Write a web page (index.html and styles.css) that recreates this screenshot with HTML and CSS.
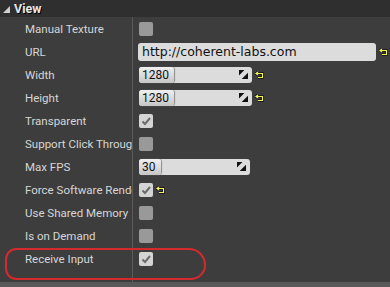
FILE: index.html
```html
<!DOCTYPE html>
<html lang="en">

<head>
    <meta charset="UTF-8">
    <title>View</title>
    <link rel="stylesheet" href="styles.css">
</head>

<body>
    <section class="panel">
        <div class="category">
            <span class="arrow"></span>
            <span class="category_title">View</span>
        </div>
        <div class="props">
            <div class="row">
                <div class="name">Manual Texture</div>
                <div class="value"><span class="check"></span></div>
            </div>
            <div class="row">
                <div class="name">URL</div>
                <div class="value">
                    <div class="textbox">http://coherent-labs.com</div>
                    <svg class="reset" viewBox="0 0 10 8"><path d="M3 1 L1 2.5 L3 4 M1 2.5 H7.5 V6.5 H3" fill="none" stroke="#101010" stroke-width="2.6"/><path d="M3 1 L1 2.5 L3 4 M1 2.5 H7.5 V6.5 H3" fill="none" stroke="#f2f25a" stroke-width="1.2"/></svg>
                </div>
            </div>
            <div class="row">
                <div class="name">Width</div>
                <div class="value">
                    <div class="spin">
                        <span class="spin_num">1280</span>
                        <svg class="spin_grip" viewBox="0 0 10 10"><path d="M0 0 H6 L0 6 Z M10 3 V10 H3 Z" fill="#111"/></svg>
                    </div>
                    <svg class="reset" viewBox="0 0 10 8"><path d="M3 1 L1 2.5 L3 4 M1 2.5 H7.5 V6.5 H3" fill="none" stroke="#101010" stroke-width="2.6"/><path d="M3 1 L1 2.5 L3 4 M1 2.5 H7.5 V6.5 H3" fill="none" stroke="#f2f25a" stroke-width="1.2"/></svg>
                </div>
            </div>
            <div class="row">
                <div class="name">Height</div>
                <div class="value">
                    <div class="spin">
                        <span class="spin_num">1280</span>
                        <svg class="spin_grip" viewBox="0 0 10 10"><path d="M0 0 H6 L0 6 Z M10 3 V10 H3 Z" fill="#111"/></svg>
                    </div>
                    <svg class="reset" viewBox="0 0 10 8"><path d="M3 1 L1 2.5 L3 4 M1 2.5 H7.5 V6.5 H3" fill="none" stroke="#101010" stroke-width="2.6"/><path d="M3 1 L1 2.5 L3 4 M1 2.5 H7.5 V6.5 H3" fill="none" stroke="#f2f25a" stroke-width="1.2"/></svg>
                </div>
            </div>
            <div class="row">
                <div class="name">Transparent</div>
                <div class="value"><span class="check on"><svg viewBox="0 0 12 12"><path d="M2.5 6.5 L5 9 L10 3" fill="none" stroke="#6b6b6b" stroke-width="2"/></svg></span></div>
            </div>
            <div class="row">
                <div class="name">Support Click Through</div>
                <div class="value"><span class="check"></span></div>
            </div>
            <div class="row">
                <div class="name">Max FPS</div>
                <div class="value">
                    <div class="spin short">
                        <span class="spin_num">30</span>
                        <svg class="spin_grip" viewBox="0 0 10 10"><path d="M0 0 H6 L0 6 Z M10 3 V10 H3 Z" fill="#111"/></svg>
                    </div>
                </div>
            </div>
            <div class="row">
                <div class="name">Force Software Rendering</div>
                <div class="value">
                    <span class="check on"><svg viewBox="0 0 12 12"><path d="M2.5 6.5 L5 9 L10 3" fill="none" stroke="#6b6b6b" stroke-width="2"/></svg></span>
                    <svg class="reset" viewBox="0 0 10 8"><path d="M3 1 L1 2.5 L3 4 M1 2.5 H7.5 V6.5 H3" fill="none" stroke="#101010" stroke-width="2.6"/><path d="M3 1 L1 2.5 L3 4 M1 2.5 H7.5 V6.5 H3" fill="none" stroke="#f2f25a" stroke-width="1.2"/></svg>
                </div>
            </div>
            <div class="row">
                <div class="name">Use Shared Memory</div>
                <div class="value"><span class="check"></span></div>
            </div>
            <div class="row">
                <div class="name">Is on Demand</div>
                <div class="value"><span class="check"></span></div>
            </div>
            <div class="row">
                <div class="name">Receive Input</div>
                <div class="value"><span class="check on"><svg viewBox="0 0 12 12"><path d="M2.5 6.5 L5 9 L10 3" fill="none" stroke="#6b6b6b" stroke-width="2"/></svg></span></div>
            </div>
            <div class="row filler">
                <div class="name"></div>
                <div class="value"></div>
            </div>
            <!-- red marker around the last property -->
            <div class="marker"></div>
        </div>
        <div class="footer"></div>
    </section>
</body>

</html>
```

FILE: styles.css
```css
html,
body {
    margin: 0;
    background: #3d3d3d;
}

.panel {
    width: 390px;
    height: 287px;
    background: #3d3d3d;
    font-family: Roboto, "Liberation Sans", sans-serif;
    font-size: 11.5px;
    color: #d6d6d6;
    display: flex;
    flex-direction: column;
    overflow: hidden;
}

.category {
    height: 17px;
    background: #2f2f2f;
    display: flex;
    align-items: center;
    padding-left: 3px;
    flex-shrink: 0;
}

.arrow {
    width: 0;
    height: 0;
    border-left: 7px solid transparent;
    border-bottom: 7px solid #cfcfcf;
    margin-right: 4px;
    margin-top: 1px;
}

.category_title {
    font-weight: bold;
    font-size: 12.5px;
    color: #e8e8e8;
    text-shadow: 1px 1px 0 #000;
}

.props {
    position: relative;
    flex: 1;
    display: flex;
    flex-direction: column;
}

.row {
    height: 23px;
    display: flex;
    flex-shrink: 0;
}

.row.filler {
    height: auto;
    flex: 1;
}

.name {
    width: 133px;
    padding-left: 25px;
    box-sizing: border-box;
    border-right: 1px solid #5a5a5a;
    white-space: nowrap;
    overflow: hidden;
    display: flex;
    align-items: center;
}

.value {
    flex: 1;
    display: flex;
    align-items: center;
    padding-left: 6px;
    gap: 3px;
}

.check {
    width: 14px;
    height: 14px;
    border-radius: 2px;
    background: #999999;
    display: flex;
}

.check.on {
    background: #d4d4d4;
}

.check svg {
    width: 12px;
    height: 12px;
    margin: 1px;
}

.textbox {
    width: 238px;
    height: 18px;
    margin-left: -1px;
    box-sizing: border-box;
    background: #dcdcdc;
    border-radius: 3px;
    color: #111;
    font-family: "DejaVu Sans", sans-serif;
    font-size: 12.5px;
    padding-left: 4px;
    display: flex;
    align-items: center;
}

.spin {
    width: 113px;
    height: 16px;
    background: #dcdcdc;
    border-radius: 3px;
    display: flex;
    align-items: center;
    justify-content: space-between;
}

.spin.short {
    width: 111px;
}

.spin_num {
    height: 16px;
    padding: 0 5px 0 3px;
    box-sizing: border-box;
    background: linear-gradient(#f0f0f0, #c6c6c6);
    border-radius: 3px;
    box-shadow: 1px 0 1px #8a8a8a;
    color: #111;
    font-size: 12px;
    display: flex;
    align-items: center;
}

.spin_grip {
    width: 9px;
    height: 9px;
    margin-right: 4px;
}

.reset {
    width: 10px;
    height: 8px;
}

.marker {
    position: absolute;
    left: 5px;
    top: 231px;
    width: 197px;
    height: 28px;
    border: 2px solid #d42a2e;
    border-radius: 12px 18px 16px 12px;
    pointer-events: none;
}

.footer {
    height: 5px;
    background: #595959;
    flex-shrink: 0;
}
```
